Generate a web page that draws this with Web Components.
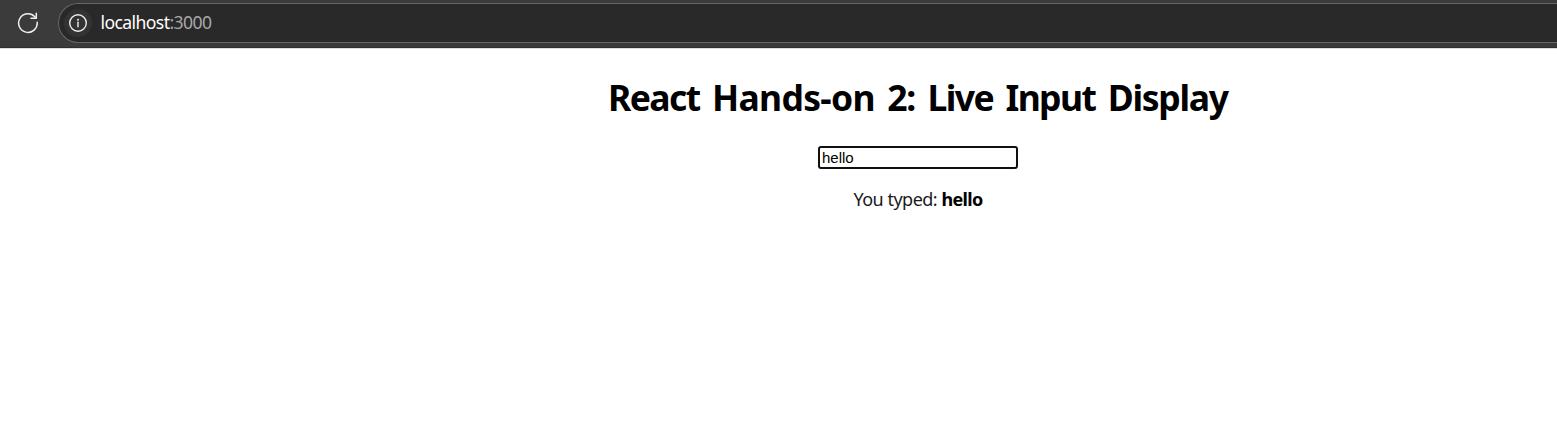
<!DOCTYPE html>
<html lang="en">
<head>
<meta charset="utf-8">
<title>Live Input Display</title>
<style>
html,body{margin:0;height:100%;overflow:hidden;background:#fff}
body{font-family:"Noto Sans","Open Sans",sans-serif;color:#000}
.a{letter-spacing:-1.6px}
.b{letter-spacing:-.7px}
.c{letter-spacing:-1.25px}
</style>
</head>
<body>
<browser-bar><span slot="host">localhost</span><span slot="port">:3000</span></browser-bar>
<live-input value="hello"><span slot="title"><span class="a">React</span> <span class="b">Hands-on</span> <span class="c">2:</span> <span class="a">Live</span> <span class="a">Input</span> <span class="c">Display</span></span></live-input>
<script>
class BrowserBar extends HTMLElement {
  constructor() {
    super();
    this.attachShadow({mode: 'open'}).innerHTML = `
<style>
:host{display:flex;box-sizing:border-box;height:49px;padding:3px 0 0 17px;background:#3b3b3b;border-bottom:1px solid #dedede;box-shadow:inset 0 -1px #302e2e;overflow:hidden}
.reload{flex:none;width:22px;height:22px;margin:9px 19px 0 0}
.field{flex:1;box-sizing:border-box;display:flex;align-items:center;height:40px;padding-left:5px;border:1px solid #666;border-right:0;border-radius:20px 0 0 20px;background:#292929}
.info{flex:none;display:flex;align-items:center;justify-content:center;width:28px;height:28px;border-radius:50%;background:#333}
.url{margin:0 0 2px 8.5px;font-size:17.6px;line-height:24px;white-space:pre;letter-spacing:-.6px;color:#fff}
.port{color:#a8a8a8}
</style>
<svg class="reload" viewBox="0 0 22 22" fill="none" stroke="#efefef" stroke-width="1.5" stroke-linecap="round" stroke-linejoin="round"><path d="M20.2 10.3A9.3 9.3 0 1 1 17.8 4.8L19 6"/><path d="M19.3 1.3V6.2H14"/></svg>
<div class="field">
 <div class="info"><svg width="20" height="20" viewBox="0 0 20 20" fill="none" stroke="#eee" stroke-width="1.4"><circle cx="10" cy="10" r="8.3"/><path d="M10 9.3v4.5" stroke-linecap="round"/><circle cx="10" cy="6.7" r="1" fill="#eee" stroke="none"/></svg></div>
 <div class="url"><slot name="host"></slot><span class="port"><slot name="port"></slot></span></div>
</div>`;
  }
}
class LiveInput extends HTMLElement {
  constructor() {
    super();
    this.attachShadow({mode: 'open'}).innerHTML = `
<style>
:host{display:flex;flex-direction:column;align-items:center;box-sizing:border-box;padding:24px 0 0 279px}
h1{margin:0;font-size:35.5px;line-height:49px;font-weight:700;white-space:nowrap;word-spacing:3.2px}
input{box-sizing:border-box;width:200px;height:23px;margin:24px 0 0;padding:1px 2px;border:2px solid #101010;border-radius:3px;outline:none;font:15px/17px "Liberation Sans",Arial,sans-serif;color:#000;background:#fff}
p{margin:18px 0 0;font-size:18px;line-height:24px;white-space:nowrap;letter-spacing:-.5px;color:#1a1a1a}
strong{letter-spacing:-.65px;color:#000}
</style>
<h1><slot name="title"></slot></h1>
<input type="text">
<p><span>You typed: </span><strong></strong></p>`;
    const input = this.shadowRoot.querySelector('input');
    const out = this.shadowRoot.querySelector('strong');
    input.value = this.getAttribute('value') || '';
    out.textContent = input.value;
    input.addEventListener('input', () => { out.textContent = input.value; });
  }
}
customElements.define('browser-bar', BrowserBar);
customElements.define('live-input', LiveInput);
</script>
</body>
</html>
